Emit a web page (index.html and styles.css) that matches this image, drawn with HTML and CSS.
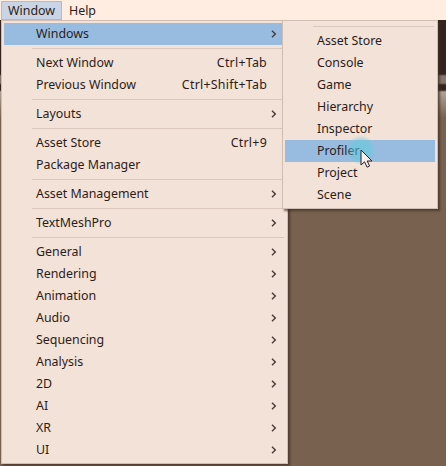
FILE: index.html
```html
<!DOCTYPE html>
<html lang="en">
<head>
<meta charset="utf-8">
<title>Window menu</title>
<link rel="stylesheet" href="styles.css">
</head>
<body>
<svg width="0" height="0" class="defs"><symbol id="chev" viewBox="0 0 6 8"><path d="M1 .8 4.3 4 1 7.2" fill="none" stroke="currentColor" stroke-width="1.4"/></symbol></svg>
<nav class="bar"><span class="tab open">Window</span><span class="tab">Help</span></nav>
<main class="scene">
<div class="strip"></div>
<div class="menu main-menu">
<div class="item active"><span>Windows</span><svg><use href="#chev"/></svg></div>
<hr>
<div class="item"><span>Next Window</span><kbd>Ctrl+Tab</kbd></div>
<div class="item"><span>Previous Window</span><kbd>Ctrl+Shift+Tab</kbd></div>
<hr>
<div class="item"><span>Layouts</span><svg><use href="#chev"/></svg></div>
<hr>
<div class="item"><span>Asset Store</span><kbd>Ctrl+9</kbd></div>
<div class="item"><span>Package Manager</span></div>
<hr>
<div class="item"><span>Asset Management</span><svg><use href="#chev"/></svg></div>
<hr>
<div class="item"><span>TextMeshPro</span><svg><use href="#chev"/></svg></div>
<hr>
<div class="item"><span>General</span><svg><use href="#chev"/></svg></div>
<div class="item"><span>Rendering</span><svg><use href="#chev"/></svg></div>
<div class="item"><span>Animation</span><svg><use href="#chev"/></svg></div>
<div class="item"><span>Audio</span><svg><use href="#chev"/></svg></div>
<div class="item"><span>Sequencing</span><svg><use href="#chev"/></svg></div>
<div class="item"><span>Analysis</span><svg><use href="#chev"/></svg></div>
<div class="item"><span>2D</span><svg><use href="#chev"/></svg></div>
<div class="item"><span>AI</span><svg><use href="#chev"/></svg></div>
<div class="item"><span>XR</span><svg><use href="#chev"/></svg></div>
<div class="item"><span>UI</span><svg><use href="#chev"/></svg></div>
</div>
<div class="menu sub-menu">
<hr>
<div class="item">Asset Store</div>
<div class="item">Console</div>
<div class="item">Game</div>
<div class="item">Hierarchy</div>
<div class="item">Inspector</div>
<div class="item active">Profiler</div>
<div class="item">Project</div>
<div class="item">Scene</div>
</div>
<div class="halo"></div>
<svg class="cursor" viewBox="0 0 13 20"><path d="M1 1v15l3.5-3.2 2.6 5.4 2.5-1.2L7.2 12H12z" fill="#f8eeea" stroke="#2b2230" stroke-width="1"/></svg>
</main>
</body>
</html>
```

FILE: styles.css
```css
* { box-sizing: border-box; }
body {
  margin: 0;
  height: 466px;
  overflow: hidden;
  background: #78624f;
  color: #2c1c18;
  font: 12.4px/22px "Noto Sans", sans-serif;
}
.defs { position: absolute; }
.bar {
  display: flex;
  height: 20px;
  padding: 1px 0 0 1px;
  background: #ffede2;
}
.tab { height: 19px; padding: 0 7px; line-height: 19px; }
.tab.open {
  width: 61px;
  padding: 0 6px;
  background: #c9d5e4;
  border: 1px solid #a9bdd4;
  line-height: 17px;
}
.scene { position: relative; height: 446px; }
.strip {
  height: 100px;
  background: linear-gradient(#35241d 0 54px, #85766c 56px 63px, #35241d 65px 70px, #b0a296 72px, #78624f 98px);
}
.menu {
  position: absolute;
  top: 0;
  background: #f3e2d8;
  border: 1px solid #d0bdb3;
  box-shadow: 2px 2px 2px #3e2d24b0;
}
.main-menu { left: 1px; width: 287px; height: 444px; padding: 2px; }
.sub-menu { left: 282px; width: 156px; height: 189px; padding: 2px; }
.item { display: flex; align-items: center; height: 22px; padding: 0 8px 0 32px; }
.active { background: #98bce0; }
.item svg { width: 6px; height: 8px; margin-left: auto; color: #4b3936; }
.item kbd { margin: 0 10px 0 auto; font: inherit; letter-spacing: .25px; }
hr { height: 1px; margin: 3px 1px 3px 28px; border: 0; background: #d9c7bd; }
.halo {
  position: absolute;
  left: 346px;
  top: 115px;
  width: 30px;
  height: 30px;
  border-radius: 50%;
  background: radial-gradient(closest-side, #5ecbdc90 0 60%, #5ecbdc00);
}
.cursor { position: absolute; left: 360px; top: 129px; width: 13px; height: 20px; }
```
